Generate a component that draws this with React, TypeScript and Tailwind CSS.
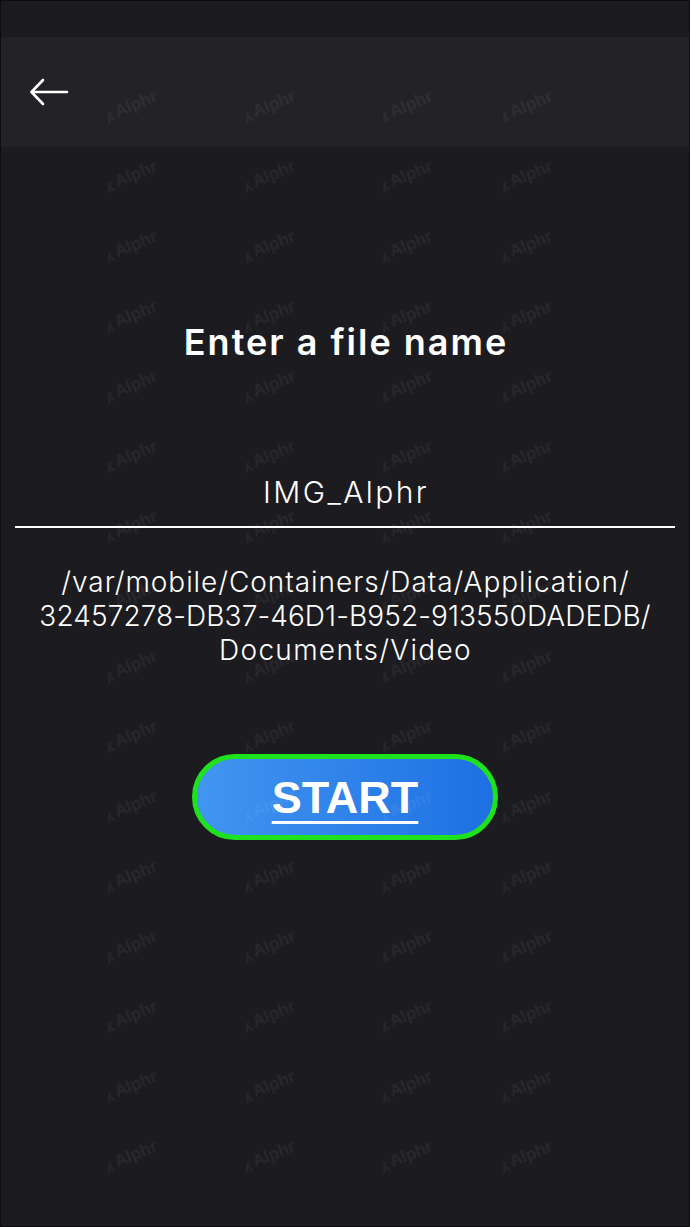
const marks: { x: number; y: number }[] = [];
const cols = [130, 268, 405, 525];
for (let r = 0; r < 16; r++) {
  for (const c of cols) {
    marks.push({ x: c, y: 105 + r * 70 });
  }
}

function Watermark() {
  return (
    <div className="pointer-events-none absolute inset-0 overflow-hidden">
      {marks.map((m, i) => (
        <div
          key={i}
          className="absolute flex -translate-x-1/2 -translate-y-1/2 -rotate-[22deg] items-end gap-[3px] text-[17px] font-semibold text-white/[0.05]"
          style={{ left: m.x, top: m.y, fontFamily: '"Liberation Sans", sans-serif' }}
        >
          <span className="text-[13px]">ʎ</span>
          <span>Alphr</span>
        </div>
      ))}
    </div>
  );
}

export default function App() {
  return (
    <div className="relative flex h-[1227px] w-[690px] flex-col overflow-hidden border border-[#0d0d0f] bg-[#1c1c20] font-['Inter',sans-serif] text-white">
      <div className="h-[36px] bg-[#1b1b1f]" />
      <header className="flex h-[110px] items-center bg-[#232327] pl-[28px]">
        <svg width="40" height="28" viewBox="0 0 40 28" fill="none" stroke="white" strokeWidth="2.6" strokeLinecap="round" strokeLinejoin="round">
          <path d="M3 14H38" />
          <path d="M14 2L2.5 14L14 26" />
        </svg>
      </header>

      <main className="flex flex-col items-center">
        <h1 className="mt-[175px] pl-[2px] text-[36px] leading-[40px] font-semibold tracking-[2px]">Enter a file name</h1>

        <div className="mt-[110px] w-[660px] self-center border-b-2 border-white pb-[14px] pl-[2px] text-center text-[30px] leading-[40px] font-light tracking-[2.4px]">
          IMG_Alphr
        </div>

        <p className="mt-[37px] flex flex-col items-center text-[28px] leading-[34px] font-light">
          <span className="pl-[1px] tracking-[0.95px]">/var/mobile/Containers/Data/Application/</span>
          <span className="tracking-[0.1px]">32457278-DB37-46D1-B952-913550DADEDB/</span>
          <span className="pl-[1px] tracking-[1.3px]">Documents/Video</span>
        </p>

        <button className="mt-[87px] flex h-[86px] w-[306px] items-center justify-center rounded-full border-[5px] border-[#1fe21f] bg-gradient-to-r from-[#4295f0] to-[#1e70e3]">
          <span className="font-['Liberation_Sans',Arial,sans-serif] text-[45px] leading-none font-bold underline decoration-[3px] underline-offset-[8px]">
            START
          </span>
        </button>
      </main>

      <Watermark />
    </div>
  );
}
